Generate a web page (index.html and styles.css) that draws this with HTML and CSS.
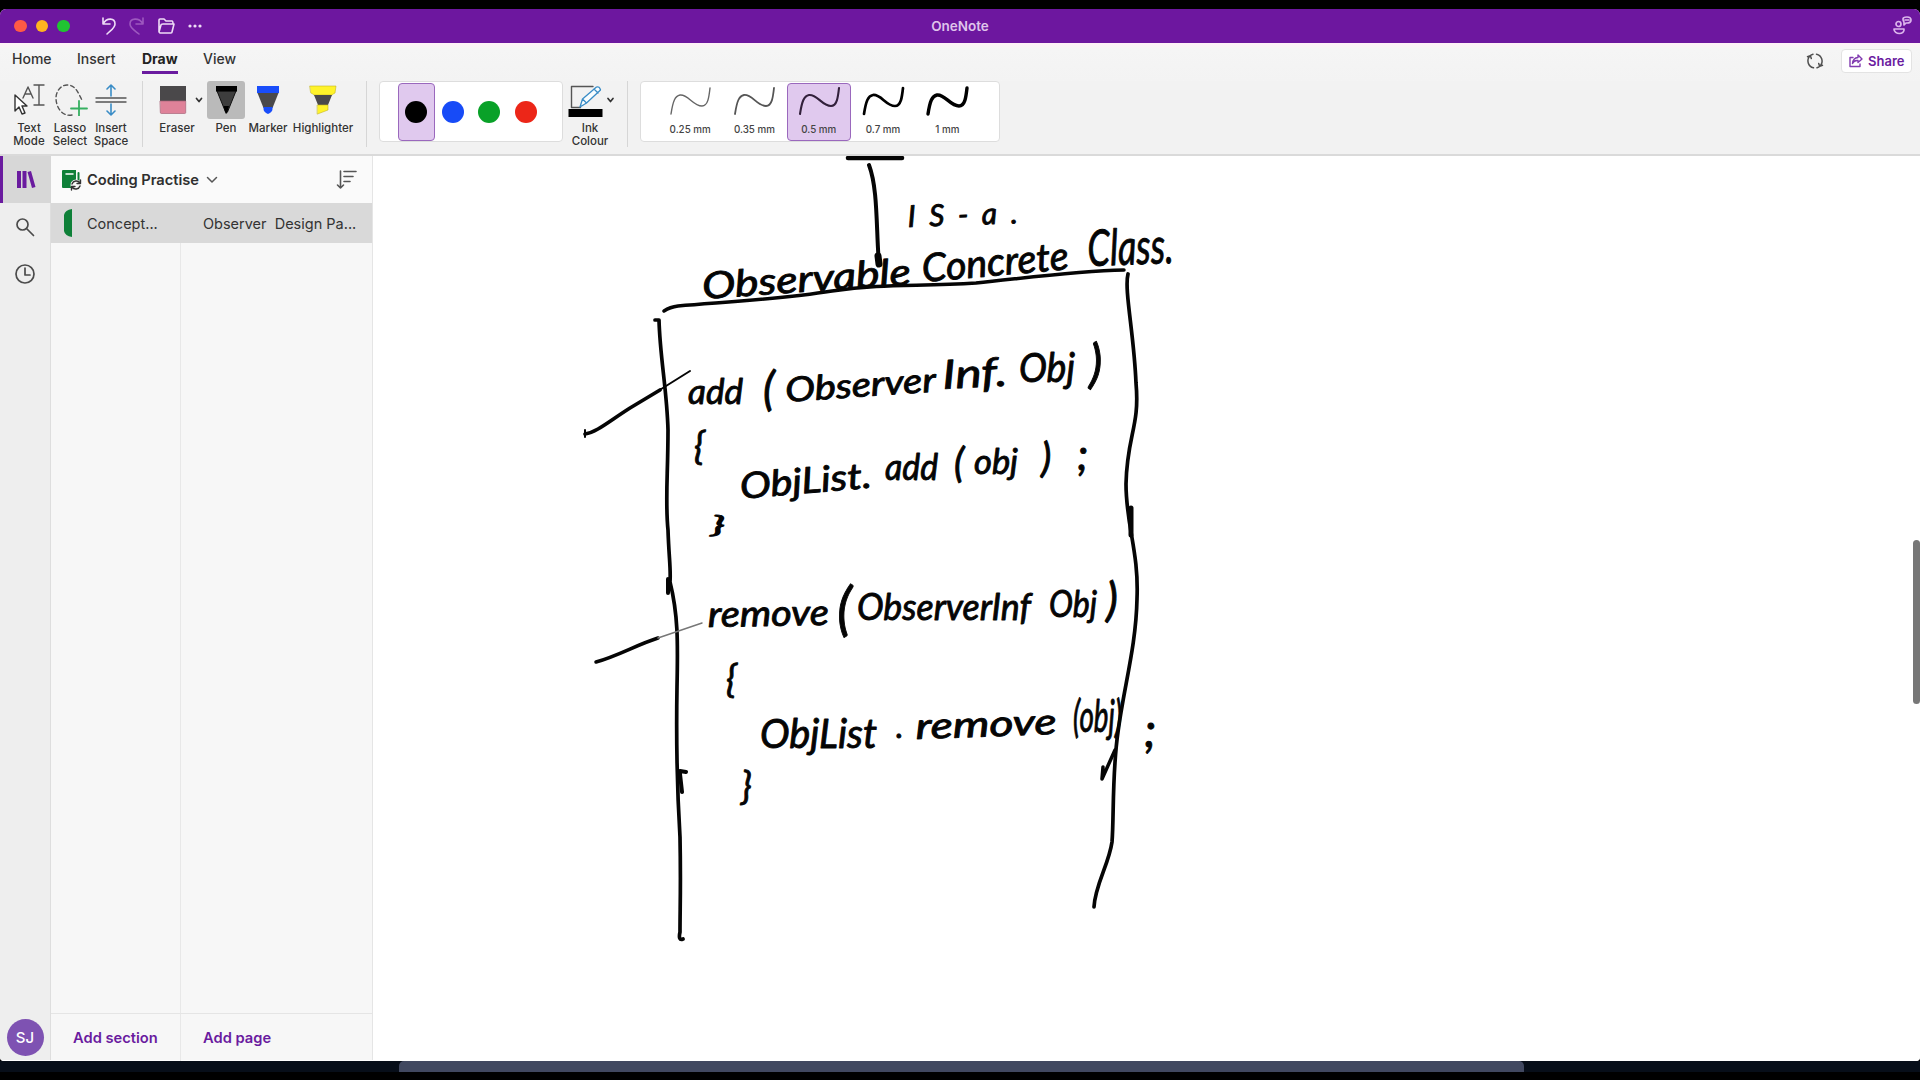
FILE: index.html
```html
<!DOCTYPE html>
<html lang="en">
<head>
<meta charset="utf-8">
<title>OneNote</title>
<link rel="stylesheet" href="styles.css">
</head>
<body>
<div class="window">
  <header class="titlebar">
    <div class="bar-left">
      <div class="lights"><i class="light close"></i><i class="light minimise"></i><i class="light maximise"></i></div>
      <svg class="quick" width="106" height="22" viewBox="100 15 106 22">
        <path d="M103 18v6h7M103 24c4-7 12-6 12 0 0 4-4 6-8 10"/>
        <path class="dim" d="M143 18v6h-7M143 24c-4-7-13-6-13 0 0 4 4 6 9 10"/>
        <path d="M159 32V20q0-1 1-1h4l2 2h6q1 0 1 3M159 32l2-7q0-1 2-1h11l-2 8q0 1-1 1h-11z"/>
        <g class="dots"><circle cx="190" cy="26" r="1.6"/><circle cx="195" cy="26" r="1.6"/><circle cx="200" cy="26" r="1.6"/></g>
      </svg>
    </div>
    <span class="title">OneNote</span>
    <svg class="people" width="20" height="20" viewBox="0 0 20 20"><circle cx="6.500" cy="8" r="2.500"/><path d="M2 13h10c1 6-10 6-10 0zM11 3q0-2 4-2t4 3-4 3h-1l-2 2v-3q-1-1-1-3zM13 4h4"/></svg>
  </header>

  <nav class="tabs">
    <span class="tab home">Home</span><span class="tab insert">Insert</span><span class="tab draw">Draw</span><span class="tab view">View</span>
    <svg class="sync" width="18" height="18" viewBox="0 0 18 18"><path d="M7.500 15.800A7 7 0 0 1 4 4M1.500 4.800L4.300 3.600l1 3M10.500 2.200A7 7 0 0 1 14 14M16.500 13.200l-2.800 1.200-1-3M4 4a7 7 0 0 1 3-1.700M14 14a7 7 0 0 1-3 1.700"/></svg>
    <button class="share"><svg width="14" height="14" viewBox="0 0 14 14"><path d="M4 3.500H1v9h10V10M9 1l4 4-4 3.500V6.500Q5 6 3.500 9.500 4 4 9 3.500z"/></svg>Share</button>
  </nav>

  <div class="ribbon">
    <div class="tool text">
      <svg width="34" height="32" viewBox="13 84 34 32"><path class="soft" d="M23 98l5-11 5 11M25 94h6M34 85h10M39 85v20M34 105h10"/><path class="cursor" d="M15 95v16l4-4 3 7 3-1-3-7h5z"/></svg>
      <span>Text<br>Mode</span>
    </div>
    <div class="tool lasso">
      <svg width="34" height="32" viewBox="54 84 34 32"><path class="soft" stroke-dasharray="4 3" d="M72 115C62 117 56 107 56 98c0-7 5-13 11-13 9 0 11 8 15 15"/><path class="green" d="M79 101v15M71 108.500h16"/></svg>
      <span>Lasso<br>Select</span>
    </div>
    <div class="tool space">
      <svg width="32" height="32" viewBox="95 84 32 32"><path class="soft" d="M96 98h30M96 102h30"/><path class="blue" d="M111 96V86M107 89l4-4 4 4M111 104v10M107 111l4 4 4-4"/></svg>
      <span>Insert<br>Space</span>
    </div>
    <i class="rule"></i>
    <div class="tool eraser">
      <svg width="28" height="32" viewBox="159 84 28 32"><path fill="#4a484a" d="M160 86h26v15h-26z"/><path fill="#df8299" stroke="#a7667a" stroke-width=".7" d="M160.300 101h25.400v11.500q0 1-1 1h-23.400q-1 0-1-1z"/></svg>
      <span>Eraser</span>
    </div>
    <svg class="chevron" width="8" height="8" viewBox="0 0 8 8"><path d="M1.500 2.500L4 5.500l2.500-3"/></svg>
    <div class="tool pen">
      <svg width="38" height="38" viewBox="207 81 38 38"><path fill="#3d3d3d" stroke="#111" d="M217 91l8.500 21h2L236 91z"/><path fill="#000" d="M216 86h21v5.500h-21zM223.500 106h5.500l-2 7.500h-1.500z"/></svg>
      <span>Pen</span>
    </div>
    <div class="tool marker">
      <svg width="24" height="32" viewBox="256 84 24 32"><path fill="#4a494b" d="M257.500 93h21l-6 15h-9z"/><path fill="#194dfa" d="M257 86h22v7h-22zM263.500 107h9v2q0 3-4.500 5-4.500-2-4.500-5z"/></svg>
      <span>Marker</span>
    </div>
    <div class="tool highlighter">
      <svg width="28" height="32" viewBox="309 84 28 32"><path fill="#fff32a" stroke="#c5b71c" stroke-width=".6" d="M310 86h26l-1 7q-2 1-3 2h-18q-1-1-3-2z"/><path fill="#4a494b" d="M314 95h18l-4 10h-10z"/><path fill="#fff32a" stroke="#c5b71c" stroke-width=".6" d="M317.500 105h10.500v5l-10.500 4z"/></svg>
      <span>Highlighter</span>
    </div>
    <i class="rule"></i>
    <div class="colours">
      <span class="swatch chosen"><i class="black"></i></span><span class="swatch"><i class="royal"></i></span><span class="swatch"><i class="leaf"></i></span><span class="swatch"><i class="red"></i></span>
    </div>
    <div class="tool ink">
      <svg width="50" height="34" viewBox="567 84 50 34"><path class="soft" d="M592 86.500h-21.500v21h9"/><path fill="#f8fdff" stroke="#398cc6" stroke-width="1.300" d="M579 107l2.500-8 14-12q3-1 4 3l-14 13zM593 89l4 4M581.500 99l4 4"/><path fill="#000" d="M567.500 109h34v8h-34z"/><path d="M607 98.500l2.500 3 2.500-3" stroke="#333" stroke-width="1.700"/></svg>
      <span>Ink<br>Colour</span>
    </div>
    <i class="rule"></i>
    <div class="widths">
      <div class="width"><svg width="44" height="32" viewBox="0 0 44 32"><path stroke-width="1.400" stroke="#666" d="M3 28C5 15 7 10 12 9c8-1 13 11 22 11 6 0 7-9 8-18"/></svg>0.25 mm</div>
      <div class="width"><svg width="44" height="32" viewBox="0 0 44 32"><path stroke-width="1.800" stroke="#555" d="M3 28C5 15 7 10 12 9c8-1 13 11 22 11 6 0 7-9 8-18"/></svg>0.35 mm</div>
      <div class="width chosen"><svg width="44" height="32" viewBox="0 0 44 32"><path stroke-width="2.100" stroke="#32203b" d="M3 28C5 15 7 10 12 9c8-1 13 11 22 11 6 0 7-9 8-18"/></svg>0.5 mm</div>
      <div class="width"><svg width="44" height="32" viewBox="0 0 44 32"><path stroke-width="2.700" stroke="#000" d="M3 28C5 15 7 10 12 9c8-1 13 11 22 11 6 0 7-9 8-18"/></svg>0.7 mm</div>
      <div class="width"><svg width="44" height="32" viewBox="0 0 44 32"><path stroke-width="3.400" stroke="#000" d="M3 28C5 15 7 10 12 9c8-1 13 11 22 11 6 0 7-9 8-18"/></svg>1 mm</div>
    </div>
  </div>

  <main class="workspace">
    <aside class="rail">
      <div class="rail-item active"><svg width="20" height="20" viewBox="0 0 20 20"><path fill="#6a1b9f" d="M1 1h4v17H1zM6.500 1h4v17h-4zM11.500 2l3.500-1 4.500 16-3.500 1z"/></svg></div>
      <div class="rail-item"><svg width="20" height="20" viewBox="0 0 20 20"><circle cx="7.500" cy="7.500" r="5.500"/><path d="M11.500 11.500l7 7"/></svg></div>
      <div class="rail-item"><svg width="22" height="22" viewBox="0 0 22 22"><circle cx="11" cy="11" r="9"/><path d="M11 5v7h5"/></svg></div>
      <div class="avatar">SJ</div>
    </aside>
    <section class="panel">
      <div class="notebook">
        <svg width="21" height="22" viewBox="0 0 21 22"><path fill="#0e8038" d="M2 1h13v18H2q-1 0-1-1V2q0-1 1-1z"/><path stroke="#fff" stroke-width="1.500" d="M5 5h7"/><path stroke="#0e8038" stroke-width="2" d="M17.500 4v8"/><circle cx="15" cy="16" r="5.500" fill="#f7f7f7"/><path stroke="#333" stroke-width="1.400" d="M11 15a4.500 4.500 0 0 1 8-1M19.500 11v3.500H16M19 17a4.500 4.500 0 0 1-8 1M10.500 21v-3.500H14"/></svg>
        <strong>Coding Practise</strong>
        <svg class="down" width="12" height="8" viewBox="0 0 12 8"><path d="M1.500 1.500L6 6l4.500-4.500"/></svg>
        <svg class="sort" width="22" height="22" viewBox="0 0 22 22"><path d="M4.500 2v17M1.500 16l3 3 3-3M8 2.500h12M8 7.500h9M8 12.500h6"/></svg>
      </div>
      <div class="row">
        <svg width="12" height="28" viewBox="0 0 12 28"><path fill="#0e8038" d="M10 0v28q-7-1-8-6V6Q3 1 10 0z"/></svg>
        <span class="section-name">Concept...</span><span class="page-name">Observer&nbsp; Design Pa...</span>
      </div>
      <div class="lists"><div></div><div></div></div>
      <div class="adders"><span>Add section</span><span>Add page</span></div>
    </section>
    <section class="page">
      <svg class="ink-layer" width="1547" height="904" viewBox="373 156 1547 904">
        <g class="strokes">
          <path stroke-width="4.500" d="M848 158H902"/>
          <path stroke-width="4" d="M869 165c9 24 7 62 10 100"/>
          <path stroke-width="7" d="M878 256l1 8"/>
          <path stroke-width="3.500" d="M664 311q6-4 14-5c62-5 104-7 154-15 54-8 85-4 144-8 50-5 99-12 148-13"/>
          <path stroke-width="3.700" d="M655 320h4c1 38 8 70 9 110 0 45-3 71 0 100 1 29 3 40 2 52 8 32 8 59 7 105-1 57 0 101 3 150 1 50 0 70 0 95q-2 9 3 7"/>
          <path stroke-width="4" d="M668 579v14M680 771l6 1M680 774l2 18"/>
          <path stroke-width="3.700" d="M1128 274c-4 16 6 59 8 109 4 44-9 52-10 101 0 42 13 67 11 115-1 48-13 87-19 133-6 41-4 86-6 110-3 22-17 43-18 65"/>
          <path stroke-width="5" d="M1131 508v27"/>
          <path stroke-width="3.500" d="M1103 767l-1 12 13-29"/>
          <path stroke-width="3.700" d="M585 434c12-2 23-12 45-26l30-18"/>
          <path stroke-width="2" d="M585 430v7M658 391l32-20"/>
          <path stroke-width="3.500" d="M596 662c22-6 40-17 62-24"/>
          <path stroke="#777" stroke-width="1.500" d="M658 638l44-15"/>
        </g>
        <g class="handwriting">
          <text x="908" y="227" textLength="110" transform="rotate(-2 908 227)" font-size="30">IS-a.</text>
          <text x="703" y="299" textLength="209" lengthAdjust="spacingAndGlyphs" transform="rotate(-4 703 299)" font-size="37">Observable</text>
          <text x="923" y="282" textLength="147" lengthAdjust="spacingAndGlyphs" transform="rotate(-5 923 282)" font-size="39">Concrete</text>
          <text x="1088" y="266" textLength="86" lengthAdjust="spacingAndGlyphs" transform="rotate(-2 1088 266)" font-size="50">Class.</text>

          <text x="688" y="404" textLength="55" lengthAdjust="spacingAndGlyphs" font-size="34">add</text>
          <text x="763" y="405" font-size="46">(</text>
          <text x="786" y="402" textLength="151" lengthAdjust="spacingAndGlyphs" transform="rotate(-4 786 402)" font-size="34">Observer</text>
          <text x="943" y="389" textLength="65" lengthAdjust="spacingAndGlyphs" transform="rotate(-3 943 389)" font-size="40">Inf.</text>
          <text x="1019" y="382" textLength="56" lengthAdjust="spacingAndGlyphs" font-size="40">Obj</text>
          <text x="1089" y="382" font-size="52">)</text>
          <text x="694" y="459" font-size="38">{</text>
          <text x="741" y="499" textLength="132" lengthAdjust="spacingAndGlyphs" transform="rotate(-5 741 499)" font-size="36">ObjList.</text>
          <text x="885" y="480" textLength="53" lengthAdjust="spacingAndGlyphs" font-size="36">add</text>
          <text x="954" y="477" font-size="40">(</text>
          <text x="974" y="474" textLength="44" lengthAdjust="spacingAndGlyphs" font-size="34">obj</text>
          <text x="1041" y="472" font-size="40">)</text>
          <text x="1077" y="470" font-size="44">;</text>
          <text x="711" y="533" textLength="14" lengthAdjust="spacingAndGlyphs" font-size="23">}</text>

          <text x="708" y="627" textLength="121" lengthAdjust="spacingAndGlyphs" transform="rotate(-1 708 627)" font-size="36">remove</text>
          <text x="837" y="629" font-size="58">(</text>
          <text x="857" y="620" textLength="174" lengthAdjust="spacingAndGlyphs" font-size="37">ObserverInf</text>
          <text x="1049" y="617" textLength="48" lengthAdjust="spacingAndGlyphs" font-size="36">Obj</text>
          <text x="1106" y="616" font-size="46">)</text>
          <text x="726" y="692" font-size="38">{</text>
          <text x="760" y="748" textLength="117" lengthAdjust="spacingAndGlyphs" font-size="40">ObjList</text>
          <text x="896" y="738" font-size="32">.</text>
          <text x="916" y="739" textLength="141" lengthAdjust="spacingAndGlyphs" transform="rotate(-2 916 739)" font-size="36">remove</text>
          <text x="1073" y="732" textLength="49" lengthAdjust="spacingAndGlyphs" font-size="44">(obj)</text>
          <text x="1144" y="747" font-size="48">;</text>
          <text x="741" y="799" font-size="38">}</text>
        </g>
      </svg>
      <i class="scrollbar"></i>
    </section>
  </main>
</div>
<footer class="desktop"><i class="dock"></i></footer>
</body>
</html>
```
FILE: styles.css
```css
* { box-sizing: border-box; }
body { margin: 0; height: 1080px; padding-top: 9px; overflow: hidden; background: #000; font: 500 14px Inter, "Liberation Sans", sans-serif; color: #333; }
svg { display: block; flex: none; fill: none; stroke-linecap: round; stroke-linejoin: round; }
.window { display: flex; flex-direction: column; height: 1052px; border-radius: 6px 6px 4px 4px; overflow: hidden; background: #f2f2f2; }

.titlebar { height: 34px; flex: none; display: grid; grid-template-columns: 1fr 100px 1fr; align-items: center; padding: 0 8px; background: #6d179f; }
.bar-left { display: flex; align-items: center; padding-left: 6px; }
.lights { display: flex; gap: 9px; width: 86px; }
.light { width: 12.500px; height: 12.500px; border-radius: 50%; }
.close { background: #ff5a45; }
.minimise { background: #ffb41f; }
.maximise { background: #20c432; }
.quick { stroke: #eedcf6; stroke-width: 1.600; }
.quick .dim { stroke: #9d58bf; }
.quick .dots { fill: #eedcf6; stroke: none; }
.title { text-align: center; font-size: 13.500px; font-weight: 600; color: #dfc4eb; }
.people { justify-self: end; stroke: #dcb5ec; stroke-width: 1.700; }

.tabs { height: 38px; flex: none; display: flex; align-items: flex-start; padding: 0 8px 0 12px; background: linear-gradient(#fff0f7, #f5f5f5 6px, #f3f3f3); }
.tab { height: 31px; padding-top: 7px; font-size: 14px; line-height: 18px; }
.home { width: 65px; }
.insert { width: 65px; }
.draw { width: 36px; margin-right: 25px; border-bottom: 3px solid #6a1b9f; font-weight: 700; color: #222; }
.sync { margin: 9px 17px 0 auto; stroke: #505050; stroke-width: 1.500; }
.share { display: flex; align-items: center; gap: 5px; width: 71px; height: 24px; margin-top: 6px; padding: 0 0 0 7px; border: 1px solid #e3e3e3; border-radius: 4px; background: #fff; color: #6a1b9f; font: 600 13px Inter, sans-serif; }
.share svg { stroke: #813bb0; stroke-width: 1.400; }

.ribbon { height: 75px; flex: none; display: flex; align-items: flex-start; padding-left: 9px; border-bottom: 2px solid #dadada; background: #f2f2f2; }
.tool { display: flex; flex-direction: column; align-items: center; gap: 4px; padding-top: 3px; font-size: 11.500px; line-height: 13px; text-align: center; white-space: nowrap; }
.tool svg { margin-bottom: 2px; }
.soft { stroke: #555; stroke-width: 1.400; }
.cursor { fill: #fff; stroke: #333; stroke-width: 1.400; }
.green { stroke: #35af60; stroke-width: 1.800; }
.blue { stroke: #398cc6; stroke-width: 1.600; }
.rule { width: 1px; height: 66px; margin: 0 0 0 11px; background: #d6d6d6; }
.text, .space { width: 40px; }
.lasso { width: 42px; }
.lasso svg { margin-left: 2px; }
.text svg { margin-left: 2px; }
.eraser { width: 36px; margin-left: 16px; }
.eraser svg { margin-left: -9px; }
.chevron { margin: 15px 4px 0 0; stroke: #333; stroke-width: 1.700; }
.pen { width: 38px; padding-top: 0; gap: 3px; }
.pen svg { margin: 0; border-radius: 3px; background: #bababa; }
.marker { width: 46px; }
.highlighter { width: 64px; }
.colours, .widths { display: flex; height: 61px; margin-left: 12px; border: 1px solid #ddd; border-radius: 4px; background: #fff; }
.colours { width: 184px; padding: 1px 0 0 18px; }
.swatch { display: grid; place-items: center; width: 36.500px; height: 58px; border: 1px solid transparent; border-radius: 4px; }
.swatch i { width: 22px; height: 22px; border-radius: 50%; }
.chosen { border-color: #9a68bd; background: #e0c9ee; }
.black { background: #000; }
.royal { background: #174bf7; }
.leaf { background: #09a128; }
.red { background: #ec2618; }
.ink { width: 54px; gap: 2px; }
.ink svg { margin-left: 5px; }
.ink + .rule { margin-left: 10px; }
.widths { width: 360px; padding: 1px 0 0 17px; }
.width { display: flex; flex-direction: column; align-items: center; gap: 6px; width: 64.300px; height: 58px; padding-top: 2px; border: 1px solid transparent; border-radius: 4px; font-size: 9.800px; line-height: 12px; color: #444; }
.width.chosen { border-color: #9a68bd; }

.workspace { flex: 1; display: flex; min-height: 0; border-bottom: 1px solid #fff; }
.rail { width: 51px; display: flex; flex-direction: column; align-items: center; background: #eee; border-right: 1px solid #dedede; }
.rail-item { width: 51px; height: 47px; display: grid; place-items: center; stroke: #4b4b4b; stroke-width: 1.700; }
.active { background: #d7d7d7; border-left: 3px solid #6a1b9f; padding-right: 2px; stroke: none; }
.avatar { display: grid; place-items: center; width: 37px; height: 37px; margin: auto 0 4px; border-radius: 50%; background: #7e52b2; color: #fff; font-size: 15px; }
.panel { width: 322px; display: flex; flex-direction: column; border-right: 1px solid #e5e5e5; background: #f7f7f7; }
.notebook { height: 47px; display: flex; align-items: center; padding: 1px 14px 0 10px; background: #fafafa; }
.notebook strong { width: 115px; margin: 0 4px 0 5px; font-size: 14.700px; font-weight: 600; letter-spacing: -.05px; white-space: nowrap; color: #2f2f2f; }
.down { stroke: #555; stroke-width: 1.500; }
.sort { margin-left: auto; stroke: #555; stroke-width: 1.600; }
.row { height: 40px; display: flex; align-items: center; padding-left: 11px; background: #d9d9d9; font-size: 14.500px; font-weight: 400; color: #333; white-space: nowrap; }
.section-name { width: 116px; margin-left: 13px; }
.lists { flex: 1; }
.lists, .adders { display: grid; grid-template-columns: 130px 1fr; }
.lists div:first-child, .adders span:first-child { border-right: 1px solid #e8e8e8; }
.adders { height: 47px; border-top: 1px solid #e5e5e5; color: #6a1b9f; font-size: 14.700px; font-weight: 600; line-height: 48px; }
.adders span { padding-left: 22px; white-space: nowrap; }
.page { position: relative; flex: 1; background: #fff; }
.strokes { stroke: #050505; }
.handwriting { fill: #050505; stroke: #050505; stroke-width: .9; font-family: Lato, sans-serif; font-style: italic; font-weight: 400; }
.scrollbar { position: absolute; right: 0; top: 384px; width: 7px; height: 164px; border-radius: 4px; background: #777; }
.desktop { display: flex; height: 11px; padding-left: 399px; background: #070e19; }
.dock { width: 1125px; height: 11px; border-radius: 5px 5px 0 0; background: #414860; }
```
